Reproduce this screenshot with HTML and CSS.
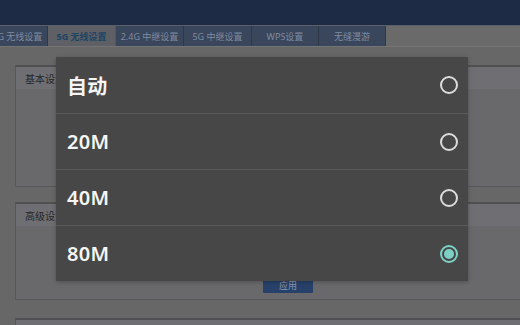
FILE: index.html
```html
<!DOCTYPE html>
<html lang="zh-CN">
<head>
<meta charset="utf-8">
<title>5G 无线设置</title>
<link rel="stylesheet" href="styles.css">
</head>
<body>
<div class="page">
  <header class="topbar"></header>
  <nav class="tabs">
    <div class="tab-strip">
      <div class="tab">2.4G 无线设置</div>
      <div class="tab active">5G 无线设置</div>
      <div class="tab">2.4G 中继设置</div>
      <div class="tab">5G 中继设置</div>
      <div class="tab">WPS设置</div>
      <div class="tab">无缝漫游</div>
    </div>
  </nav>
  <main class="content">
    <section class="panel panel-basic">
      <div class="panel-head">基本设置</div>
      <div class="panel-body"></div>
    </section>
    <section class="panel panel-adv">
      <div class="panel-head">高级设置</div>
      <div class="panel-body">
        <button class="apply">应用</button>
      </div>
    </section>
    <section class="panel panel-more">
      <div class="panel-head"></div>
    </section>
  </main>
</div>

<div class="sheet">
  <div class="option"><span class="label">自动</span><span class="radio"></span></div>
  <div class="option"><span class="label">20M</span><span class="radio"></span></div>
  <div class="option"><span class="label">40M</span><span class="radio"></span></div>
  <div class="option"><span class="label">80M</span><span class="radio checked"></span></div>
</div>
</body>
</html>
```

FILE: styles.css
```css
* { box-sizing: border-box; }

html, body {
  margin: 0;
  padding: 0;
}

body {
  width: 520px;
  height: 325px;
  overflow: hidden;
  background: #676767;
  font-family: "Noto Sans", "Noto Sans CJK SC", sans-serif;
  position: relative;
}

.page {
  display: flex;
  flex-direction: column;
}

.topbar {
  height: 26px;
  background: #1d2b45;
  border-bottom: 1px solid #59606b;
}

.tabs {
  height: 21px;
  background: #6a6a6b;
  border-bottom: 1px solid #747475;
  overflow: hidden;
}

.tab-strip {
  display: flex;
  margin-left: -20px;
  height: 20px;
}

.tab {
  width: 68px;
  flex: none;
  height: 20px;
  display: flex;
  align-items: center;
  justify-content: center;
  background: #3a465b;
  border-right: 1px solid #2e3849;
  color: #7d8ba1;
  font-size: 9px;
  font-family: "Noto Sans", "Noto Sans CJK SC", sans-serif;
  white-space: nowrap;
}

.tab:nth-child(5) { width: 67px; }
.tab:nth-child(6) { width: 67px; }

.tab.active {
  background: #5e6065;
  color: #1d4563;
  font-weight: 700;
  border-right-color: #545659;
}

.content {
  display: flex;
  flex-direction: column;
  padding: 18px 0 0 15px;
  gap: 15px;
}

.panel {
  margin-right: -10px;
  border: 1px solid #58585b;
  border-top: 2px solid #505053;
  background: #69696b;
}

.panel-head {
  height: 22px;
  padding-left: 9px;
  display: flex;
  align-items: center;
  background: #6f6f73;
  color: #262628;
  font-size: 10px;
  font-family: "Noto Sans CJK SC", sans-serif;
}

.panel-basic { height: 122px; }

.panel-adv { height: 98px; }

.panel-adv .panel-body {
  display: flex;
  padding: 53px 0 0 247px;
}

.panel-more { margin-top: 3px; }

.apply {
  width: 50px;
  height: 14px;
  padding: 0;
  border: none;
  border-radius: 1px;
  background: #27416a;
  color: #8a9ab2;
  font-size: 9px;
  line-height: 14px;
  font-family: "Noto Sans CJK SC", sans-serif;
}

.sheet {
  position: absolute;
  left: 56px;
  top: 57px;
  width: 412px;
  background: #474747;
  box-shadow: 0 1px 4px rgba(0, 0, 0, 0.25);
  display: flex;
  flex-direction: column;
}

.option {
  height: 56px;
  display: flex;
  align-items: center;
  justify-content: space-between;
  padding: 0 10px 0 11px;
  border-top: 1px solid #5a5a5a;
}

.option:first-child {
  height: 56px;
  border-top: none;
}

.label {
  color: #f5f5f5;
  font-size: 20px;
  font-weight: 600;
  font-family: "Noto Sans", "Noto Sans CJK SC", sans-serif;
  letter-spacing: 0.3px;
}

.radio {
  width: 18px;
  height: 18px;
  border-radius: 50%;
  border: 2px solid #dcdcdc;
  display: flex;
  align-items: center;
  justify-content: center;
}

.radio.checked {
  border-color: #7dd0c4;
}

.radio.checked::after {
  content: "";
  width: 10px;
  height: 10px;
  border-radius: 50%;
  background: #7dd0c4;
}
```
